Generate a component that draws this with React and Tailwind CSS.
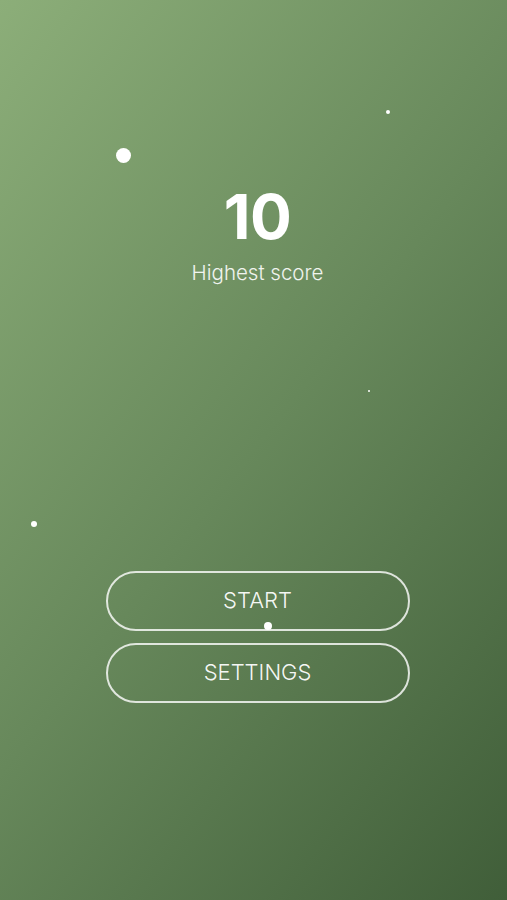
import React from "react";

const dots = [
  { x: 123, y: 155, s: 15 },
  { x: 388, y: 112, s: 4 },
  { x: 369, y: 391, s: 2 },
  { x: 34, y: 524, s: 6 },
  { x: 268, y: 626, s: 8 },
];

function Dot({ x, y, s }) {
  return (
    <span
      className="absolute rounded-full bg-white"
      style={{ left: x - s / 2, top: y - s / 2, width: s, height: s }}
    />
  );
}

export default function App() {
  return (
    <div
      className="relative w-full h-[900px] overflow-hidden bg-[linear-gradient(128deg,#8cae79_0%,#67885b_50%,#405e39_100%)] text-white flex flex-col items-center pl-[8px]"
      style={{ fontFamily: "Inter, 'Noto Sans', sans-serif" }}
    >
      {/* score */}
      <div className="mt-[186px] flex flex-col items-center">
        <h1 className="text-[62px] leading-[62px] font-bold tracking-[-0.5px]">10</h1>
        <p className="mt-[10px] text-[20.5px] font-light text-white/90">Highest score</p>
      </div>

      {/* menu buttons */}
      <div className="mt-[282px] flex flex-col gap-[12px] w-[304px]">
        <button className="h-[60px] rounded-full border-2 border-white/80 text-[22px] font-light text-white/95">
          START
        </button>
        <button className="h-[60px] rounded-full border-2 border-white/80 text-[22px] font-light text-white/95">
          SETTINGS
        </button>
      </div>

      {dots.map((d, i) => (
        <Dot key={i} {...d} />
      ))}
    </div>
  );
}
